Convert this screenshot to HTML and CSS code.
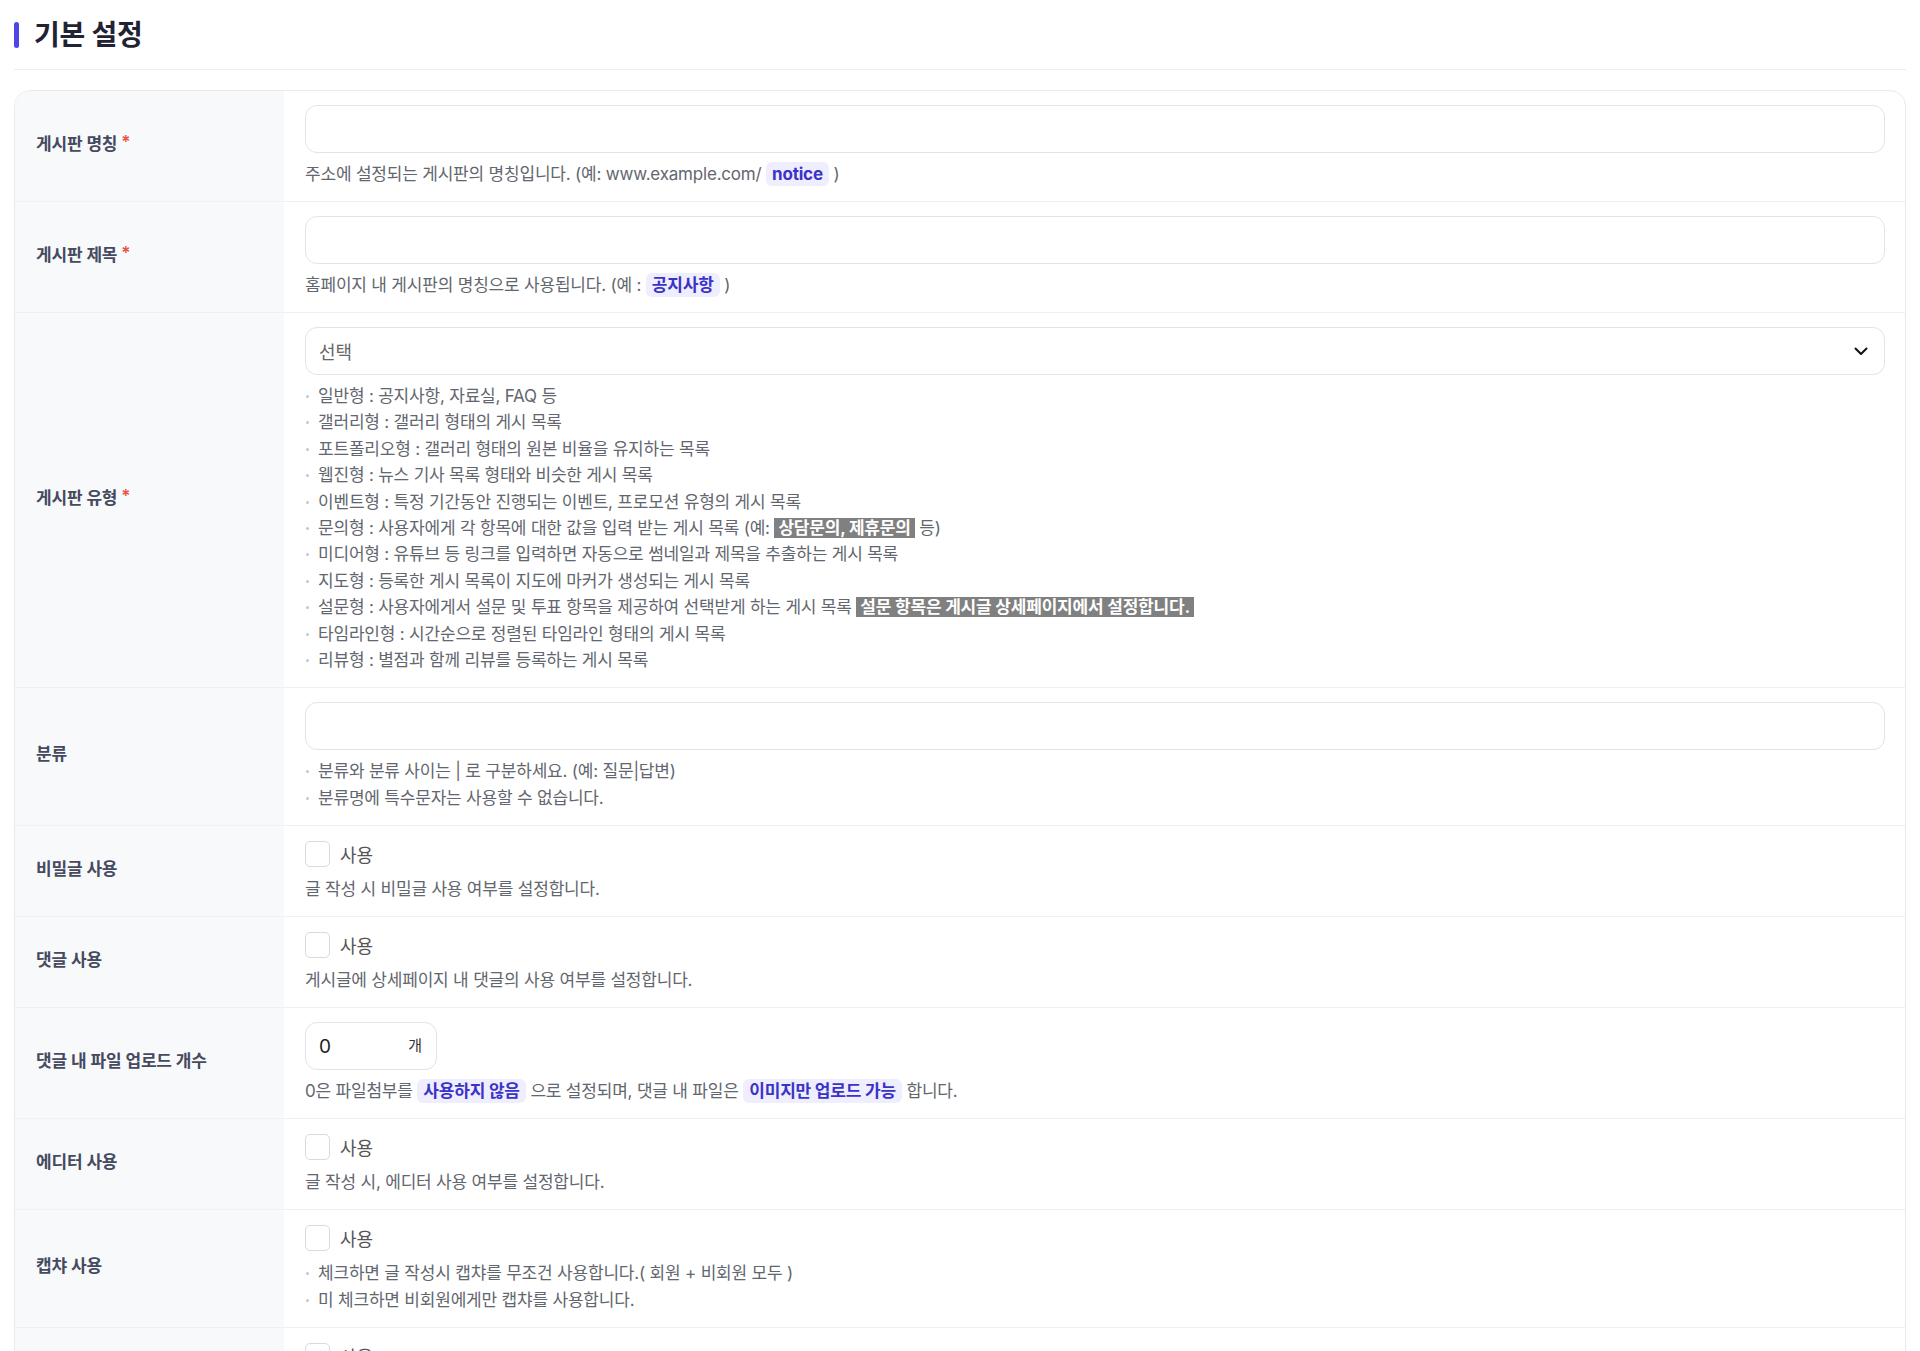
FILE: index.html
```html
<!DOCTYPE html>
<html lang="ko">
<head>
<meta charset="utf-8">
<title>기본 설정</title>
<link rel="stylesheet" href="styles.css">
</head>
<body>
<div class="page">
  <div class="section-head">
    <span class="bar"></span>
    <h2 class="section-title">기본 설정</h2>
  </div>

  <div class="card">
    <div class="row">
      <div class="label">게시판 명칭 <span class="req">*</span></div>
      <div class="field">
        <div class="input"></div>
        <p class="help">주소에 설정되는 게시판의 명칭입니다. (예: www.example.com/ <span class="tag">notice</span> )</p>
      </div>
    </div>

    <div class="row">
      <div class="label">게시판 제목 <span class="req">*</span></div>
      <div class="field">
        <div class="input"></div>
        <p class="help">홈페이지 내 게시판의 명칭으로 사용됩니다. (예 : <span class="tag">공지사항</span> )</p>
      </div>
    </div>

    <div class="row">
      <div class="label">게시판 유형 <span class="req">*</span></div>
      <div class="field">
        <div class="input select">
          <span class="placeholder">선택</span>
          <svg class="chev" width="14" height="9" viewBox="0 0 14 9"><path d="M1.5 1.5 L7 7 L12.5 1.5" fill="none" stroke="#111" stroke-width="2" stroke-linecap="round" stroke-linejoin="round"/></svg>
        </div>
        <ul class="list">
          <li>일반형 : 공지사항, 자료실, FAQ 등</li>
          <li>갤러리형 : 갤러리 형태의 게시 목록</li>
          <li>포트폴리오형 : 갤러리 형태의 원본 비율을 유지하는 목록</li>
          <li>웹진형 : 뉴스 기사 목록 형태와 비슷한 게시 목록</li>
          <li>이벤트형 : 특정 기간동안 진행되는 이벤트, 프로모션 유형의 게시 목록</li>
          <li>문의형 : 사용자에게 각 항목에 대한 값을 입력 받는 게시 목록 (예: <span class="mark">상담문의, 제휴문의</span> 등)</li>
          <li>미디어형 : 유튜브 등 링크를 입력하면 자동으로 썸네일과 제목을 추출하는 게시 목록</li>
          <li>지도형 : 등록한 게시 목록이 지도에 마커가 생성되는 게시 목록</li>
          <li>설문형 : 사용자에게서 설문 및 투표 항목을 제공하여 선택받게 하는 게시 목록 <span class="mark">설문 항목은 게시글 상세페이지에서 설정합니다.</span></li>
          <li>타임라인형 : 시간순으로 정렬된 타임라인 형태의 게시 목록</li>
          <li>리뷰형 : 별점과 함께 리뷰를 등록하는 게시 목록</li>
        </ul>
      </div>
    </div>

    <div class="row">
      <div class="label">분류</div>
      <div class="field">
        <div class="input"></div>
        <ul class="list">
          <li>분류와 분류 사이는 | 로 구분하세요. (예: 질문|답변)</li>
          <li>분류명에 특수문자는 사용할 수 없습니다.</li>
        </ul>
      </div>
    </div>

    <div class="row">
      <div class="label">비밀글 사용</div>
      <div class="field">
        <label class="check"><span class="box"></span><span class="check-text">사용</span></label>
        <p class="help">글 작성 시 비밀글 사용 여부를 설정합니다.</p>
      </div>
    </div>

    <div class="row">
      <div class="label">댓글 사용</div>
      <div class="field">
        <label class="check"><span class="box"></span><span class="check-text">사용</span></label>
        <p class="help">게시글에 상세페이지 내 댓글의 사용 여부를 설정합니다.</p>
      </div>
    </div>

    <div class="row">
      <div class="label">댓글 내 파일 업로드 개수</div>
      <div class="field">
        <div class="num">
          <span class="num-val">0</span>
          <span class="num-unit">개</span>
        </div>
        <p class="help">0은 파일첨부를 <span class="tag">사용하지 않음</span> 으로 설정되며, 댓글 내 파일은 <span class="tag">이미지만 업로드 가능</span> 합니다.</p>
      </div>
    </div>

    <div class="row">
      <div class="label">에디터 사용</div>
      <div class="field">
        <label class="check"><span class="box"></span><span class="check-text">사용</span></label>
        <p class="help">글 작성 시, 에디터 사용 여부를 설정합니다.</p>
      </div>
    </div>

    <div class="row">
      <div class="label">캡챠 사용</div>
      <div class="field">
        <label class="check"><span class="box"></span><span class="check-text">사용</span></label>
        <ul class="list">
          <li>체크하면 글 작성시 캡챠를 무조건 사용합니다.( 회원 + 비회원 모두 )</li>
          <li>미 체크하면 비회원에게만 캡챠를 사용합니다.</li>
        </ul>
      </div>
    </div>

    <div class="row">
      <div class="label">&nbsp;</div>
      <div class="field">
        <label class="check"><span class="box"></span><span class="check-text">사용</span></label>
        <p class="help">&nbsp;</p>
      </div>
    </div>
  </div>
</div>
</body>
</html>
```

FILE: styles.css
```css
* { box-sizing: border-box; }

html, body {
  margin: 0;
  padding: 0;
  background: #ffffff;
}

body {
  font-family: Inter, "Noto Sans CJK KR", "Noto Sans", sans-serif;
  color: #333;
  -webkit-font-smoothing: antialiased;
}

.page {
  padding: 0 14px;
}

.section-head {
  display: flex;
  align-items: center;
  gap: 15px;
  padding: 16px 0 15px;
  border-bottom: 1px solid #eceef1;
}

.bar {
  width: 5px;
  height: 26px;
  border-radius: 3px;
  background: #4f46e5;
}

.section-title {
  margin: 0;
  font-size: 28px;
  line-height: 38px;
  font-weight: 700;
  color: #1f2333;
  letter-spacing: -0.2px;
}

.card {
  margin-top: 20px;
  border: 1px solid #e9eaee;
  border-radius: 16px;
  overflow: hidden;
  background: #fff;
}

.row {
  display: grid;
  grid-template-columns: 269px 1fr;
  border-top: 1px solid #eff0f3;
}

.row:first-child {
  border-top: none;
}

.label {
  display: flex;
  align-items: center;
  padding: 0 21px 8px;
  background: #f8f9fb;
  font-size: 17px;
  font-weight: 600;
  color: #454a5e;
  letter-spacing: -0.2px;
}

.req {
  color: #e5534b;
  margin-left: 4px;
  font-weight: 600;
}

.field {
  padding: 14px 20px 14px 21px;
}

.input {
  height: 48px;
  border: 1px solid #e1e3e8;
  border-radius: 12px;
  background: #fff;
}

.select {
  display: flex;
  align-items: center;
  justify-content: space-between;
  padding: 0 16px 0 13px;
}

.placeholder {
  font-size: 18px;
  color: #666;
}

.chev {
  display: block;
}

.help {
  margin: 8px 0 0;
  font-size: 17px;
  line-height: 26px;
  color: #62666e;
  letter-spacing: -0.2px;
}

.list {
  list-style: none;
  margin: 8px 0 0;
  padding: 0;
}

.list li {
  position: relative;
  padding-left: 13px;
  font-size: 17px;
  line-height: 26.4px;
  color: #62666e;
  letter-spacing: -0.2px;
}

.list li::before {
  content: "";
  position: absolute;
  left: 1px;
  top: 12px;
  width: 3px;
  height: 3px;
  border-radius: 50%;
  background: #c4c6cc;
}

.tag {
  display: inline-block;
  padding: 0 6px;
  border-radius: 6px;
  background: #eeeefe;
  color: #3b32c8;
  font-weight: 700;
  line-height: 24px;
}

.mark {
  background: #808080;
  color: #fff;
  font-weight: 700;
  padding: 0 4px;
}

.check {
  display: flex;
  align-items: center;
  gap: 10px;
  height: 28px;
}

.box {
  width: 25px;
  height: 26px;
  border: 1px solid #d8dade;
  border-radius: 5px;
  background: #fff;
}

.check-text {
  font-size: 18px;
  color: #555;
}

.num {
  width: 132px;
  height: 48px;
  border: 1px solid #e1e3e8;
  border-radius: 12px;
  display: flex;
  align-items: center;
  justify-content: space-between;
  padding: 0 14px 4px 13px;
}

.num-val {
  font-size: 19px;
  color: #222;
  padding-top: 4px;
}

.num-unit {
  font-size: 15px;
  color: #333;
}
```
